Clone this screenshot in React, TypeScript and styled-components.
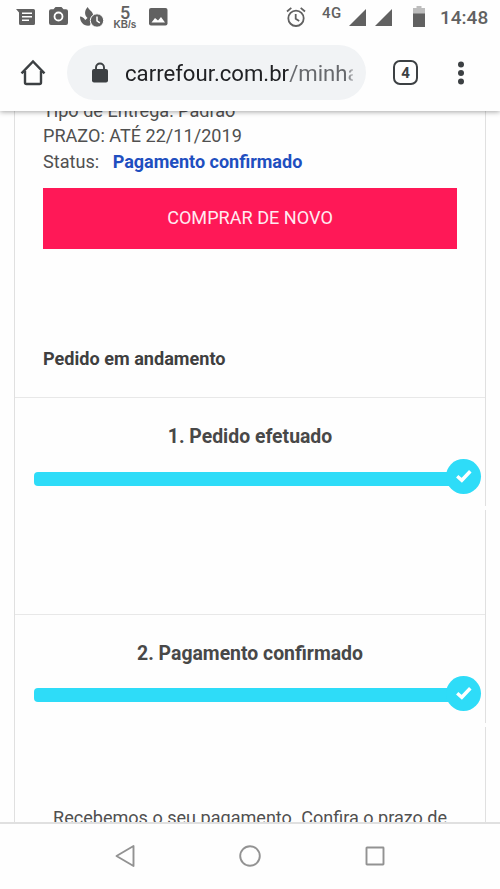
import React from "react";
import styled, { createGlobalStyle } from "styled-components";

const GlobalStyle = createGlobalStyle`
  * { box-sizing: border-box; }
  body { margin: 0; background: #fff; font-family: Roboto, "Noto Sans", sans-serif; }
  svg { display: block; flex: none; }
`;

const Screen = styled.div`
  display: flex;
  flex-direction: column;
  width: 500px;
  height: 889px;
  overflow: hidden;
  background: #fefefe;
`;

const StatusBar = styled.div`
  display: flex;
  align-items: flex-start;
  flex: none;
  height: 34px;
  color: #616161;
`;

const Slot = styled.div<{ $gap: number; $width: number; $top: number }>`
  flex: none;
  width: ${(p) => p.$width}px;
  margin: ${(p) => p.$top}px 0 0 ${(p) => p.$gap}px;
  white-space: nowrap;
`;

const Speed = styled.div`
  display: flex;
  flex-direction: column;
  align-items: center;
  font-size: 18px;
  font-weight: 500;
  line-height: 15px;
`;

const SpeedUnit = styled.span`
  font-family: "Liberation Sans", sans-serif;
  font-size: 10px;
  font-weight: 700;
  line-height: 9px;
`;

const Network = styled.div`
  font-size: 15px;
  font-weight: 500;
  line-height: 16px;
  letter-spacing: 0.5px;
`;

const Clock = styled.div`
  font-size: 19px;
  font-weight: 500;
  line-height: 19px;
`;

const Toolbar = styled.header`
  position: relative;
  z-index: 1;
  display: flex;
  align-items: center;
  flex: none;
  height: 77px;
  padding-left: 20px;
  background: #fefefe;
  box-shadow: 0 1px 5px rgba(0, 0, 0, 0.35);
  clip-path: inset(0 0 -10px 0);
`;

const AddressBar = styled.div`
  display: flex;
  align-items: center;
  width: 299px;
  height: 55px;
  margin-left: 21px;
  padding-left: 25px;
  border-radius: 28px;
  background: #f1f3f5;
`;

const Url = styled.div`
  width: 228px;
  margin-left: 17px;
  overflow: hidden;
  white-space: nowrap;
  font-size: 22.15px;
  line-height: 32px;
  color: #202124;
  mask-image: linear-gradient(to right, #000 222px, transparent 231px);
`;

const UrlPath = styled.span`
  color: #67696d;
`;

const TabCount = styled.div`
  display: flex;
  align-items: center;
  justify-content: center;
  width: 25px;
  height: 25px;
  margin-left: 27px;
  border: 2.5px solid #3c4043;
  border-radius: 7px;
  font-size: 15px;
  font-weight: 700;
  color: #3c4043;
`;

const MenuDots = styled.svg`
  margin-left: 39px;
`;

const Page = styled.main`
  flex: 1;
  min-height: 0;
  overflow: hidden;
  padding: 0 14px;
`;

const Card = styled.section`
  height: 100%;
  border: solid #e0e0e0;
  border-width: 0 1px;
`;

const Summary = styled.div`
  height: 287px;
  padding: 0 28px;
  overflow: hidden;
  border-bottom: 1px solid #e8e8e8;
`;

const Details = styled.div`
  margin-top: -13.5px;
  font-size: 18.1px;
  line-height: 25.5px;
  color: #505050;
`;

const DetailLine = styled.div`
  white-space: nowrap;
`;

const StatusValue = styled.strong`
  margin-left: 13.5px;
  font-weight: 700;
  font-size: 18px;
  color: #1f4fc0;
`;

const BuyButton = styled.button`
  display: block;
  width: 414px;
  height: 60.5px;
  margin-top: 14px;
  padding: 0;
  border: 0;
  background: #ff1857;
  font: 400 18.1px/60px Roboto, sans-serif;
  color: #ffeaf0;
`;

const Heading = styled.h2`
  margin: 97px 0 0;
  font-size: 18.1px;
  font-weight: 700;
  line-height: 26px;
  color: #3f3f3f;
`;

const Step = styled.article`
  position: relative;
  height: 216.5px;
  padding: 24px 4px 0 19px;
  border-bottom: 1px solid #e8e8e8;

  &::after {
    content: "";
    position: absolute;
    top: 108px;
    right: -1px;
    width: 1px;
    height: 4px;
    background: #fefefe;
  }
`;

const StepTitle = styled.h3`
  margin: 0 0 0 -15px;
  font-size: 19.4px;
  font-weight: 700;
  line-height: 29px;
  text-align: center;
  color: #484848;
`;

const Progress = styled.div`
  display: flex;
  align-items: center;
  height: 35px;
  margin-top: 8px;
`;

const Track = styled.div`
  flex: 1;
  height: 14px;
  margin-top: 4px;
  border-radius: 4px 0 0 4px;
  background: #2edcf8;
`;

const Done = styled.div`
  display: flex;
  align-items: center;
  justify-content: center;
  width: 35px;
  height: 35px;
  margin-left: -4px;
  border-radius: 50%;
  background: #2edcf8;
`;

const StepText = styled.p`
  margin: 94px 0 0 19px;
  font-size: 18.07px;
  line-height: 26px;
  white-space: nowrap;
  color: #505050;
`;

const NavBar = styled.nav`
  display: flex;
  align-items: center;
  justify-content: center;
  gap: 101px;
  flex: none;
  height: 67px;
  padding-bottom: 2px;
  border-top: 2px solid #e0e0e0;
  background: #fefefe;
`;

function StepProgress({ title, children }: { title: string; children?: React.ReactNode }) {
  return (
    <Step>
      <StepTitle>{title}</StepTitle>
      <Progress>
        <Track />
        <Done>
          <svg width="17" height="15" viewBox="0 0 17 15" fill="none" stroke="#fff" strokeWidth="3.5">
            <path d="M2.200 7.300 6.800 11.300 15.300 2.300" />
          </svg>
        </Done>
      </Progress>
      {children}
    </Step>
  );
}

function Signal() {
  return (
    <svg width="17" height="17" viewBox="0 0 17 17" fill="currentColor">
      <path d="M17 0v17H0z" />
    </svg>
  );
}

export default function App() {
  return (
    <Screen>
      <GlobalStyle />
      <StatusBar>
        <Slot $gap={16} $width={19} $top={9}>
          <svg width="19" height="16" viewBox="0 0 19 16" fill="currentColor">
            <path d="M0 0h17.500Q19 0 19 1.500v13q0 1.500-1.500 1.500h-13Q3 16 3 14.500V3.500z" />
            <path d="M6 4.200h10M6 7.700h10M6 11.200h7" stroke="#fff" strokeWidth="1.500" />
          </svg>
        </Slot>
        <Slot $gap={14} $width={19} $top={7}>
          <svg width="19" height="18" viewBox="0 0 19 18" fill="currentColor">
            <path d="M6.500 0h6l2 2.200H17q2 0 2 2V16q0 2-2 2H2q-2 0-2-2V4.200q0-2 2-2h2.500z" />
            <circle cx="9.500" cy="9.500" r="4" stroke="#fff" strokeWidth="1.800" />
          </svg>
        </Slot>
        <Slot $gap={12} $width={24} $top={7}>
          <svg width="24" height="20" viewBox="0 0 24 20" fill="currentColor">
            <path d="M7.800 0c.7 3 5.800 4.500 5.200 8.500l-3 10C4 19.500 0 15.500 0 9.500c2 0 4 1.300 5.200 3.500l2.300-2C4 8 4.500 3 7.800 0z" />
            <circle cx="17" cy="13.500" r="6.700" stroke="#fff" />
            <path d="M17 9.500v4.300l2.800 2" fill="none" stroke="#fff" strokeWidth="1.500" />
          </svg>
        </Slot>
        <Slot $gap={9} $width={24} $top={5}>
          <Speed>
            5<SpeedUnit>KB/s</SpeedUnit>
          </Speed>
        </Slot>
        <Slot $gap={12} $width={19} $top={8}>
          <svg width="19" height="18" viewBox="0 0 19 18" fill="currentColor">
            <rect width="18.500" height="17.500" rx="2" />
            <path d="m2.500 14.500 3.500-4.500 3 2.500 3-3.500 4 5.500z" fill="#fff" />
          </svg>
        </Slot>
        <Slot $gap={118} $width={20} $top={7}>
          <svg width="20" height="20" viewBox="0 0 20 20" fill="none" stroke="currentColor" strokeWidth="1.800">
            <circle cx="10" cy="11.300" r="7.700" />
            <path d="m1 4.500 4.300-3.600M19 4.500 14.700.9M9.700 7v4.800l3.500 2.200" />
          </svg>
        </Slot>
        <Slot $gap={16} $width={22} $top={5}>
          <Network>4G</Network>
        </Slot>
        <Slot $gap={5} $width={17} $top={9}>
          <Signal />
        </Slot>
        <Slot $gap={9} $width={17} $top={9}>
          <Signal />
        </Slot>
        <Slot $gap={21} $width={12} $top={6}>
          <svg width="12" height="21" viewBox="0 0 12 21">
            <path d="M3.500 0h5v2H12v6H0V2h3.500z" fill="#bdbdbd" />
            <path d="M0 7.500h12V21H0z" fill="#616161" />
          </svg>
        </Slot>
        <Slot $gap={15} $width={52} $top={8}>
          <Clock>14:48</Clock>
        </Slot>
      </StatusBar>
      <Toolbar>
        <svg width="26" height="27" viewBox="0 0 26 27" fill="none" stroke="#3c4043" strokeWidth="2.400">
          <path d="M1.500 14.300 13 2.500l11.500 11.800M5 12v11.500q0 1.500 1.500 1.500h13q1.500 0 1.500-1.500V12" />
        </svg>
        <AddressBar>
          <svg width="16" height="21" viewBox="0 0 16 21">
            <rect y="7" width="16" height="13.500" rx="2" fill="#3c4043" />
            <path d="M4 8V5.500a4 4 0 0 1 8 0V8" fill="none" stroke="#3c4043" strokeWidth="1.900" />
          </svg>
          <Url>
            carrefour.com.br<UrlPath>/minhas</UrlPath>
          </Url>
        </AddressBar>
        <TabCount>4</TabCount>
        <MenuDots width="8" height="24" viewBox="0 0 8 24" fill="#3c4043">
          <circle cx="4" cy="3.500" r="3" />
          <circle cx="4" cy="12" r="3" />
          <circle cx="4" cy="20.500" r="3" />
        </MenuDots>
      </Toolbar>
      <Page>
        <Card>
          <Summary>
            <Details>
              <DetailLine>Tipo de Entrega: Padrão</DetailLine>
              <DetailLine>PRAZO: ATÉ 22/11/2019</DetailLine>
              <DetailLine>
                Status:<StatusValue>Pagamento confirmado</StatusValue>
              </DetailLine>
            </Details>
            <BuyButton>COMPRAR DE NOVO</BuyButton>
            <Heading>Pedido em andamento</Heading>
          </Summary>
          <StepProgress title="1. Pedido efetuado" />
          <StepProgress title="2. Pagamento confirmado">
            <StepText>Recebemos o seu pagamento. Confira o prazo de</StepText>
          </StepProgress>
        </Card>
      </Page>
      <NavBar>
        <svg width="24" height="24" viewBox="0 0 24 24" fill="none" stroke="#929292" strokeWidth="1.900" strokeLinejoin="round">
          <path d="M20.500 2v20L3.500 12z" />
        </svg>
        <svg width="24" height="24" viewBox="0 0 24 24" fill="none" stroke="#929292" strokeWidth="1.900">
          <circle cx="12" cy="12" r="9.800" />
        </svg>
        <svg width="24" height="24" viewBox="0 0 24 24" fill="none" stroke="#929292" strokeWidth="1.900">
          <rect x="3.500" y="3.500" width="17" height="17" rx="0.500" />
        </svg>
      </NavBar>
    </Screen>
  );
}
